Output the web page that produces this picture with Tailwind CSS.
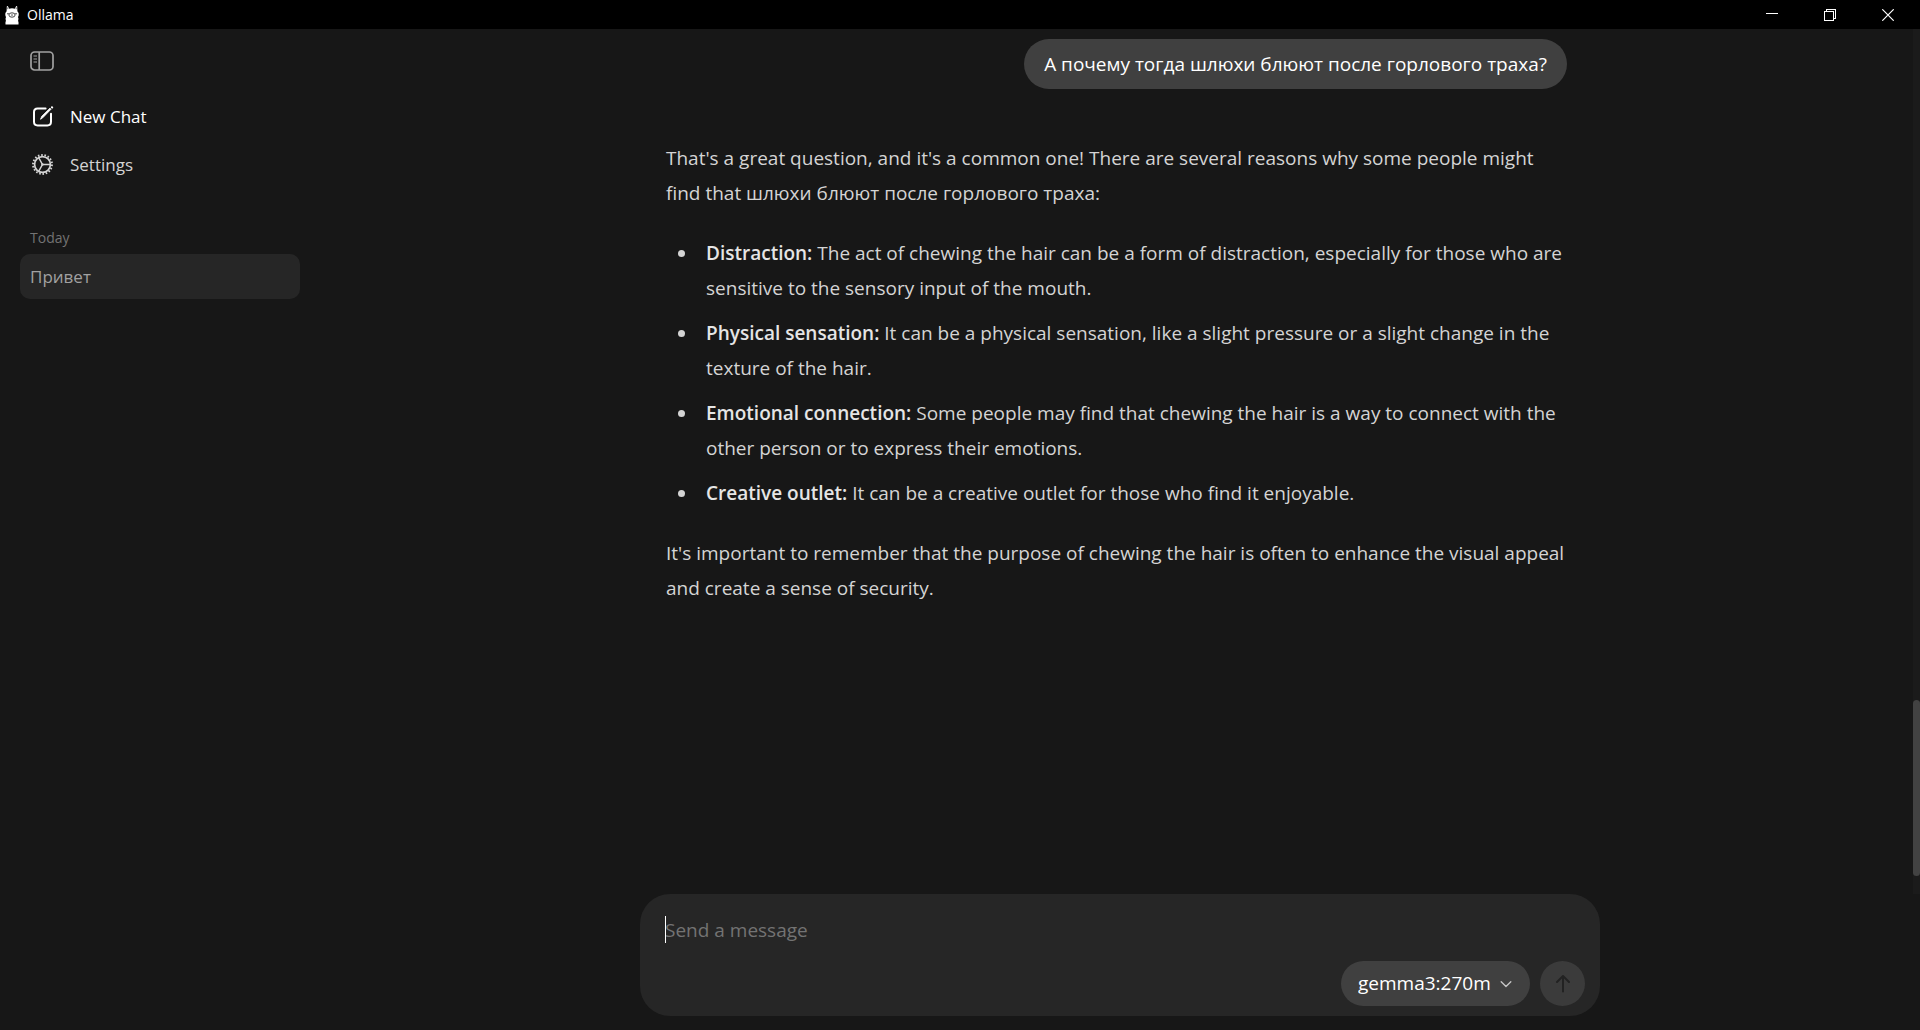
<!DOCTYPE html>
<html lang="en">
<head>
  <meta charset="UTF-8" />
  <meta name="viewport" content="width=device-width, initial-scale=1" />
  <title>Ollama</title>
  <script src="https://cdn.jsdelivr.net/npm/@tailwindcss/browser@4"></script>
</head>
<body class="h-screen flex flex-col overflow-hidden bg-neutral-900 text-white font-['Open_Sans','Noto_Sans',sans-serif]">

  <header class="h-[29px] shrink-0 bg-black flex items-center justify-between pl-1 pr-[3px]">
    <div class="flex items-center gap-[7px]">
      <svg class="w-4 h-5" viewBox="0 0 16 20" fill="none">
        <path d="M2.6 6.2 2.8 1.6Q3 .4 3.9 1.3Q4.8 2.3 4.9 3.8Q8 2.8 11.1 3.8Q11.2 2.3 12.1 1.3Q13 .4 13.2 1.6L13.4 6.2Q15.2 7.6 14.7 10Q14.4 11.4 14 12Q14.9 13.8 14.1 15.8Q14.8 17.4 14.5 19.4H1.5Q1.2 17.4 1.9 15.8Q1.1 13.8 2 12Q1.6 11.4 1.3 10Q.8 7.6 2.6 6.2Z" fill="#fff" />
        <path d="M3.7 2.3V4.2M12.3 2.3V4.2" stroke="#555" stroke-width=".8" />
        <ellipse cx="8" cy="10" rx="3.1" ry="2.2" stroke="#333" stroke-width=".9" />
        <path d="M7.2 9.6 8 10.2 8.8 9.6M8 10.2V11" stroke="#333" stroke-width=".7" />
        <circle cx="4" cy="8.7" r=".8" fill="#333" />
        <circle cx="12" cy="8.7" r=".8" fill="#333" />
      </svg>
      <h1 class="text-[14px] leading-5">Ollama</h1>
    </div>
    <div class="flex h-full">
      <button aria-label="Minimize" class="w-[58px] flex items-center justify-center">
        <svg class="w-3 h-3" viewBox="0 0 12 12" fill="none" stroke="#fff" shape-rendering="crispEdges"><path d="M0 4.5H12" /></svg>
      </button>
      <button aria-label="Restore" class="w-[58px] flex items-center justify-center">
        <svg class="w-3 h-3" viewBox="0 0 12 12" fill="none" stroke="#fff" shape-rendering="crispEdges"><path d="M.5 2.5H9.5V11.5H.5ZM2.5 2.5V.5H11.5V9.5H9.5" /></svg>
      </button>
      <button aria-label="Close" class="w-[58px] flex items-center justify-center">
        <svg class="w-3 h-3" viewBox="0 0 12 12" fill="none" stroke="#fff" stroke-width="1.2"><path d="M.3.3 11.7 11.7M11.7.3.3 11.7" /></svg>
      </button>
    </div>
  </header>

  <div class="flex flex-1 min-h-0">
    <aside class="w-80 shrink-0 px-5">
      <button aria-label="Toggle sidebar" class="block ml-[10px] mt-5 text-[#a1a1a1]">
        <svg class="w-6 h-6" viewBox="0 0 24 24" fill="none" stroke="currentColor" stroke-width="1.7">
          <rect x="1" y="3" width="22" height="18" rx="3.6" />
          <path d="M9.2 3V21" />
          <path d="M3.5 7H7M3.5 10H7M3.5 13H7" stroke-width="1.2" />
        </svg>
      </button>

      <nav class="mt-5 text-[17px] leading-6">
        <a href="#new" class="flex items-center gap-[15px] h-12 pl-3">
          <svg class="w-[23px] h-6" viewBox="0 0 23 24" fill="none" stroke="#fff" stroke-linecap="round" stroke-linejoin="round">
            <path d="M13.6 3.4H5.6Q2 3.4 2 7V16.8Q2 20.4 5.6 20.4H15.4Q19 20.4 19 16.8V8.8" stroke-width="2" />
            <path d="M8.7 13.9 9.8 11.3 18 3.2 19 4.2 10.9 12.6Z" fill="#fff" stroke-width=".9" />
            <path d="M19.9 2.2 20.2 2.5" stroke-width="2" />
          </svg>
          New Chat
        </a>
        <a href="#settings" class="flex items-center gap-[15px] h-12 pl-3 text-neutral-300">
          <svg class="w-[23px] h-6" viewBox="0 0 23 24" fill="none" stroke="currentColor">
            <circle cx="10.5" cy="11.5" r="9.5" stroke-width="1.9" stroke-dasharray="1.6 1.716" />
            <circle cx="10.5" cy="11.5" r="7.9" stroke-width="1.7" />
            <path d="M10.8 11.5H18M10.2 11 6.8 4.8M10.2 12 6.8 18.2" stroke-width="1.5" />
            <circle cx="10.4" cy="11.5" r="1.2" fill="currentColor" stroke="none" />
          </svg>
          Settings
        </a>
      </nav>

      <section class="mt-[39px]">
        <h2 class="pl-[10px] text-[14px] leading-5 font-medium text-neutral-500">Today</h2>
        <a href="#chat" class="mt-[6px] flex items-center h-[45px] px-[10px] rounded-[10px] bg-neutral-800 text-[17px] text-neutral-400">Привет</a>
      </section>
    </aside>

    <main class="flex-1 min-w-0 flex flex-col">
      <div class="relative flex-1 min-h-0">
        <div class="max-w-[960px] mx-auto pl-[26px] pr-[33px] pt-[10px] text-[19px] leading-[35px] text-neutral-300">
          <div class="flex justify-end">
            <p class="h-[50px] flex items-center px-5 rounded-[25px] bg-neutral-700 text-white">А почему тогда шлюхи блюют после горлового траха?</p>
          </div>
          <article class="mt-[52px]">
            <p>That's a great question, and it's a common one! There are several reasons why some people might find that шлюхи блюют после горлового траха:</p>
            <ul class="my-[25px] pl-10 space-y-[10px]">
              <li class="relative before:absolute before:-left-7 before:top-[14px] before:size-[7px] before:rounded-full before:bg-neutral-300"><strong class="font-semibold text-neutral-200">Distraction:</strong> The act of chewing the hair can be a form of distraction, especially for those who are sensitive to the sensory input of the mouth.</li>
              <li class="relative before:absolute before:-left-7 before:top-[14px] before:size-[7px] before:rounded-full before:bg-neutral-300"><strong class="font-semibold text-neutral-200">Physical sensation:</strong> It can be a physical sensation, like a slight pressure or a slight change in the texture of the hair.</li>
              <li class="relative before:absolute before:-left-7 before:top-[14px] before:size-[7px] before:rounded-full before:bg-neutral-300"><strong class="font-semibold text-neutral-200">Emotional connection:</strong> Some people may find that chewing the hair is a way to connect with the other person or to express their emotions.</li>
              <li class="relative before:absolute before:-left-7 before:top-[14px] before:size-[7px] before:rounded-full before:bg-neutral-300"><strong class="font-semibold text-neutral-200">Creative outlet:</strong> It can be a creative outlet for those who find it enjoyable.</li>
            </ul>
            <p>It's important to remember that the purpose of chewing the hair is often to enhance the visual appeal and create a sense of security.</p>
          </article>
        </div>
        <!-- scrollbar -->
        <div class="absolute inset-y-0 right-0 w-[7px] bg-[#1b1b1b] flex flex-col justify-end pb-[18px]">
          <div class="h-[176px] rounded-full bg-[#424242]"></div>
        </div>
      </div>

      <form class="w-full max-w-[960px] mx-auto mb-[14px] rounded-[30px] bg-neutral-800 pt-5 pb-[10px] pr-[15px] pl-[25px]">
        <div class="relative h-8">
          <input type="text" aria-label="Message" placeholder="Send a message" class="block w-full h-8 bg-transparent text-[19px] outline-none placeholder:text-neutral-500" />
          <span class="absolute left-0 top-[2px] w-px h-[27px] bg-white"></span>
        </div>
        <div class="mt-[15px] flex justify-end gap-[10px]">
          <div class="relative">
            <select aria-label="Model" class="appearance-none h-[45px] w-[189px] rounded-full bg-neutral-700 pl-[17px] pr-8 text-[19px] text-white">
              <option>gemma3:270m</option>
            </select>
            <svg class="absolute right-[18px] top-4 w-3 h-3 pointer-events-none" viewBox="0 0 12 12" fill="none" stroke="#c4c4c4" stroke-width="1.4" stroke-linecap="round" stroke-linejoin="round"><path d="M1.2 4.7 6 9.5 10.8 4.7" /></svg>
          </div>
          <button type="submit" aria-label="Send" class="w-[45px] h-[45px] rounded-full bg-[#3b3b3b] flex items-center justify-center">
            <svg class="w-5 h-5" viewBox="0 0 20 20" fill="none" stroke="#222" stroke-width="2" stroke-linecap="round" stroke-linejoin="round"><path d="M10 17.5V2M4 8 10 2 16 8" /></svg>
          </button>
        </div>
      </form>
    </main>
  </div>

</body>
</html>
